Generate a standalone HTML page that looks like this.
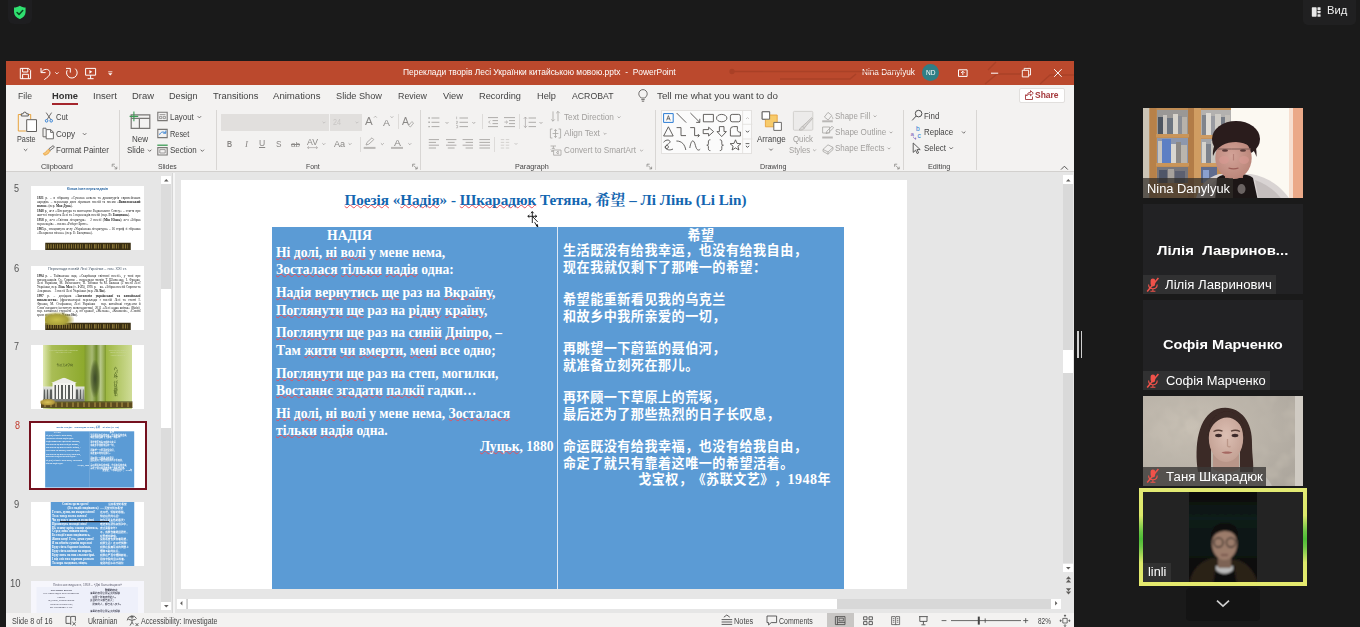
<!DOCTYPE html>
<html lang="uk">
<head>
<meta charset="utf-8">
<title>Zoom Meeting</title>
<style>
*{box-sizing:border-box;margin:0;padding:0}
html,body{width:1360px;height:627px;overflow:hidden;background:#1a1a1a}
body{position:relative;font-family:"Liberation Sans","Noto Sans CJK SC",sans-serif;font-size:9px;color:#444}
.abs{position:absolute}
#ppt{position:absolute;left:6px;top:61px;width:1068px;height:566px;background:#f3f2f1;overflow:hidden}
#titlebar{position:absolute;left:0;top:0;width:1068px;height:24px;background:#bb492d;color:#fff}
#tabs{position:absolute;left:0;top:24px;width:1068px;height:21px;background:#f3f2f1}
#ribbon{position:absolute;left:0;top:45px;width:1068px;height:65px;background:#f3f2f1}
#belowrib{position:absolute;left:0;top:110px;width:1068px;height:6px;background:linear-gradient(#d0cecc 0,#d6d4d2 1.3px,#e6e6e6 1.4px)}
#thumbs{position:absolute;left:0;top:116px;width:154px;height:436px;background:#e6e6e6;overflow:hidden}
#work{position:absolute;left:166px;top:116px;width:890px;height:436px;background:#e6e6e6;overflow:hidden}
.slide{position:absolute;width:726px;height:409px;background:#fff;overflow:hidden}
#slide{left:9px;top:3px}
#status{position:absolute;left:0;top:552px;width:1068px;height:14px;background:#f3f2f1}
.t{position:absolute;white-space:pre;line-height:1;transform-origin:0 50%;display:block}

.slide .ttl{position:absolute;left:1.5px;top:11.3px;width:726px;text-align:center;font:bold 15.1px/18px "Liberation Serif","Noto Serif CJK SC",serif;color:#1366b0;white-space:nowrap}
.tbl{position:absolute;left:91px;top:47px;width:572px;height:362px;background:#5b9bd5}
.tbl .div{position:absolute;left:285px;top:0;width:1px;height:362px;background:#dfe9f5}
.uk{position:absolute;left:4px;width:280px;font:bold 13.6px/17.6px "Liberation Serif",serif;color:#fff;white-space:nowrap}
.zh{position:absolute;left:291px;width:280px;font:bold 13.1px/16.35px "Noto Sans CJK SC","Liberation Sans",sans-serif;color:#fff;white-space:nowrap;letter-spacing:.48px;text-spacing-trim:space-all;margin-top:-.7px}
.sq{text-decoration:underline wavy #e8505a .7px;text-underline-offset:-.7px;text-decoration-skip-ink:none}

.th{position:absolute;left:25px;width:113px;height:64px;background:#fff;overflow:hidden}
.selb{position:absolute;left:22.7px;width:118.4px;height:68.6px;border:2.2px solid #74101e;background:#fff}
.m4{position:absolute;left:0;top:0;width:452px;height:256px;transform:scale(.25);transform-origin:0 0;background:#fff;overflow:hidden}
.m4 .mt{position:absolute;left:0;top:4px;width:452px;text-align:center;font:bold 13px/16px "Liberation Sans",sans-serif;color:#1f5f9f;white-space:nowrap}
.m4 .mb{position:absolute;left:24px;top:40px;width:414px;font:13.2px/15.2px "Liberation Serif",serif;color:#1a1a1a;text-align:justify}
.m4 .mb p{margin:0 0 5.5px 0}
.m4 .orn{position:absolute;left:57px;top:227px;width:342px;height:29px;background:#3a2f12}
.m4 .orn2{position:absolute;left:60px;top:233px;width:336px;height:17px;background:repeating-linear-gradient(90deg,#6b5a28 0 6px,#3a2f12 6px 10px,#8a7638 10px 14px,#3a2f12 14px 18px)}
.m4 .pag{position:absolute;left:56px;top:184px;width:116px;height:52px;background:radial-gradient(ellipse at 40% 60%,#c9c04a 0,#a9a03a 45%,rgba(150,150,60,0) 75%)}
.slide.mini{left:0;top:0;transform:scale(.15565);transform-origin:0 0}
</style>
</head>
<body>
<!-- ZOOM TOP -->
<!--ZOOMTOP-->
<span class="abs" style="left:8.0px;top:0.0px;width:24.0px;height:24.0px;background:#1e1e20;border-radius:0 0 6px 6px;"></span>
<svg class="abs" style="left:13.2px;top:4.6px" width="13.6" height="14.8" viewBox="0 0 16 17"><path d="M8,.6 C10,2 12.400,2.700 14.800,2.800 V8 c0,3.800 -2.800,6.800 -6.800,8.400 C4,14.800 1.200,11.800 1.200,8 V2.800 C3.600,2.700 6,2 8,.6 z" fill="#2fe070"/><path d="M4.800,8.600 l2.300,2.300 l4.300,-4.600" stroke="#0a4d22" stroke-width="1.900" fill="none" stroke-linecap="round" stroke-linejoin="round"/></svg>
<span class="abs" style="left:1303.0px;top:0.0px;width:53.0px;height:25.0px;background:#202021;border-radius:0 0 5px 5px;"></span>
<svg class="abs" style="left:1310.8px;top:6.8px" width="10.4" height="10.3" viewBox="0 0 11 12" fill="#e8e8e8"><rect x=".4" y=".4" width="5.6" height="11" rx=".8"/><rect x="7" y=".4" width="3.6" height="3" rx=".6"/><rect x="7" y="4.4" width="3.6" height="3" rx=".6"/><rect x="7" y="8.4" width="3.6" height="3" rx=".6"/></svg>
<span class="t" style="left:1326.8px;top:5.4px;font-size:11.80px;color:#f0f0f0;transform:scaleX(0.951);">Вид</span>
<span class="abs" style="left:1077.4px;top:331.0px;width:1.2px;height:26.5px;background:#cfcfcf;"></span>
<span class="abs" style="left:1080.6px;top:331.0px;width:1.2px;height:26.5px;background:#cfcfcf;"></span>
<!--/ZOOMTOP-->
<!-- POWERPOINT WINDOW -->
<div id="ppt">
  <div id="titlebar"></div>
  <div id="tabs"></div>
  <div id="ribbon"></div>
  <div id="belowrib"></div>
<!--TITLEBAR-->
<span class="t" style="left:397.0px;top:7.4px;font-size:8.60px;color:#fff;transform:scaleX(0.980);">Переклади творів Лесі Українки китайською мовою.pptx  -  PowerPoint</span>
<span class="t" style="left:856.0px;top:7.4px;font-size:8.60px;color:#fff;transform:scaleX(0.956);">Nina Danylyuk</span>
<span class="abs" style="left:916.0px;top:3.3px;width:17px;height:17px;border-radius:50%;background:#2f7f86"></span>
<span class="t" style="left:920.0px;top:8.6px;font-size:6.60px;color:#fff;transform:scaleX(0.997);">ND</span>
<!--/TITLEBAR-->
<!--TABS-->
<span class="t" style="left:11.5px;top:29.9px;font-size:9.70px;color:#444;transform:scaleX(0.896);">File</span>
<span class="t" style="left:86.5px;top:29.9px;font-size:9.70px;color:#444;transform:scaleX(0.989);">Insert</span>
<span class="t" style="left:125.5px;top:29.9px;font-size:9.70px;color:#444;transform:scaleX(0.972);">Draw</span>
<span class="t" style="left:163.0px;top:29.9px;font-size:9.70px;color:#444;transform:scaleX(0.944);">Design</span>
<span class="t" style="left:206.5px;top:29.9px;font-size:9.70px;color:#444;transform:scaleX(0.966);">Transitions</span>
<span class="t" style="left:267.0px;top:29.9px;font-size:9.70px;color:#444;transform:scaleX(0.990);">Animations</span>
<span class="t" style="left:329.5px;top:29.9px;font-size:9.70px;color:#444;transform:scaleX(0.948);">Slide Show</span>
<span class="t" style="left:391.5px;top:29.9px;font-size:9.70px;color:#444;transform:scaleX(0.912);">Review</span>
<span class="t" style="left:436.5px;top:29.9px;font-size:9.70px;color:#444;transform:scaleX(0.959);">View</span>
<span class="t" style="left:472.5px;top:29.9px;font-size:9.70px;color:#444;transform:scaleX(0.950);">Recording</span>
<span class="t" style="left:530.5px;top:29.9px;font-size:9.70px;color:#444;transform:scaleX(0.952);">Help</span>
<span class="t" style="left:565.5px;top:29.9px;font-size:9.70px;color:#444;transform:scaleX(0.899);">ACROBAT</span>
<span class="t" style="left:650.5px;top:29.9px;font-size:9.70px;color:#444;transform:scaleX(1.011);">Tell me what you want to do</span>
<span class="t" style="left:45.5px;top:29.9px;font-size:9.70px;color:#333;transform:scaleX(0.965);font-weight:bold;">Home</span>
<span class="abs" style="left:45.5px;top:42.0px;width:26.5px;height:2px;background:#a4262c"></span>
<span class="abs" style="left:1012.5px;top:27.0px;width:46.5px;height:15px;background:#fff;border:1px solid #e1dfdd;border-radius:2px"></span>
<span class="t" style="left:1029.4px;top:29.9px;font-size:9.20px;color:#a4373a;transform:scaleX(0.923);font-weight:bold;">Share</span>
<!--/TABS-->
<!--RIBBON-->
<span class="t" style="left:49.8px;top:51.8px;font-size:8.70px;color:#444;transform:scaleX(0.872);">Cut</span>
<span class="t" style="left:50.0px;top:68.8px;font-size:8.70px;color:#444;transform:scaleX(0.935);">Copy</span>
<span class="t" style="left:50.0px;top:85.3px;font-size:8.70px;color:#444;transform:scaleX(0.921);">Format Painter</span>
<span class="t" style="left:10.7px;top:74.1px;font-size:8.70px;color:#444;transform:scaleX(0.836);">Paste</span>
<span class="t" style="left:35.3px;top:101.8px;font-size:8.10px;color:#444;transform:scaleX(0.917);">Clipboard</span>
<span class="t" style="left:125.9px;top:74.1px;font-size:8.70px;color:#444;transform:scaleX(0.925);">New</span>
<span class="t" style="left:120.7px;top:85.3px;font-size:8.70px;color:#444;transform:scaleX(0.920);">Slide</span>
<span class="t" style="left:164.4px;top:51.8px;font-size:8.70px;color:#444;transform:scaleX(0.911);">Layout</span>
<span class="t" style="left:164.4px;top:68.5px;font-size:8.70px;color:#444;transform:scaleX(0.845);">Reset</span>
<span class="t" style="left:164.4px;top:85.3px;font-size:8.70px;color:#444;transform:scaleX(0.917);">Section</span>
<span class="t" style="left:151.8px;top:101.8px;font-size:8.10px;color:#444;transform:scaleX(0.843);">Slides</span>
<span class="abs" style="left:215.0px;top:53.0px;width:108px;height:16.5px;background:#e1dfdd"></span>
<span class="abs" style="left:324.0px;top:53.0px;width:31.5px;height:16.5px;background:#e1dfdd"></span>
<span class="t" style="left:326.5px;top:57.1px;font-size:8.30px;color:#c8c6c4;transform:scaleX(0.867);">24</span>
<span class="t" style="left:299.5px;top:101.8px;font-size:8.10px;color:#444;transform:scaleX(0.845);">Font</span>
<span class="t" style="left:220.7px;top:78.5px;font-size:9.20px;color:#8a8886;transform:scaleX(0.768);font-weight:bold;">B</span>
<span class="t" style="left:238.5px;top:78.5px;font-size:9.20px;color:#8a8886;transform:scaleX(0.978);font-style:italic;font-family:'Liberation Serif',serif;">I</span>
<span class="t" style="left:252.8px;top:78.2px;font-size:9.00px;color:#8a8886;transform:scaleX(0.954);text-decoration:underline;">U</span>
<span class="t" style="left:269.5px;top:78.5px;font-size:9.20px;color:#8a8886;transform:scaleX(0.896);">S</span>
<span class="t" style="left:284.5px;top:79.9px;font-size:7.60px;color:#8a8886;transform:scaleX(1.065);text-decoration:line-through;">ab</span>
<span class="t" style="left:301.0px;top:77.1px;font-size:8.60px;color:#8a8886;transform:scaleX(1.015);">AV</span>
<span class="t" style="left:327.8px;top:78.4px;font-size:9.40px;color:#8a8886;transform:scaleX(0.974);">Aa</span>
<span class="t" style="left:359.3px;top:55.2px;font-size:11.50px;color:#8a8886;transform:scaleX(1.004);">A</span>
<span class="t" style="left:377.0px;top:57.2px;font-size:9.50px;color:#8a8886;transform:scaleX(1.105);">A</span>
<span class="t" style="left:396.0px;top:55.4px;font-size:11.00px;color:#8a8886;transform:scaleX(0.954);">A</span>
<span class="t" style="left:387.5px;top:76.9px;font-size:9.60px;color:#8a8886;transform:scaleX(1.093);">A</span>
<span class="t" style="left:558.0px;top:51.8px;font-size:8.70px;color:#a19f9d;transform:scaleX(0.949);">Text Direction</span>
<span class="t" style="left:558.0px;top:68.3px;font-size:8.70px;color:#a19f9d;transform:scaleX(0.958);">Align Text</span>
<span class="t" style="left:558.0px;top:85.1px;font-size:8.70px;color:#a19f9d;transform:scaleX(0.937);">Convert to SmartArt</span>
<span class="t" style="left:509.0px;top:101.8px;font-size:8.10px;color:#444;transform:scaleX(0.894);">Paragraph</span>
<span class="abs" style="left:655.4px;top:49.0px;width:91px;height:43.5px;background:#fbfbfb;border:1px solid #e3e1df"></span>
<span class="t" style="left:751.0px;top:73.8px;font-size:8.70px;color:#444;transform:scaleX(0.927);">Arrange</span>
<span class="t" style="left:787.0px;top:73.8px;font-size:8.70px;color:#a19f9d;transform:scaleX(0.899);">Quick</span>
<span class="t" style="left:782.8px;top:84.8px;font-size:8.70px;color:#a19f9d;transform:scaleX(0.895);">Styles</span>
<span class="t" style="left:828.7px;top:50.8px;font-size:8.70px;color:#a19f9d;transform:scaleX(0.912);">Shape Fill</span>
<span class="t" style="left:828.7px;top:67.0px;font-size:8.70px;color:#a19f9d;transform:scaleX(0.930);">Shape Outline</span>
<span class="t" style="left:828.7px;top:83.0px;font-size:8.70px;color:#a19f9d;transform:scaleX(0.920);">Shape Effects</span>
<span class="t" style="left:754.0px;top:101.8px;font-size:8.10px;color:#444;transform:scaleX(0.889);">Drawing</span>
<span class="t" style="left:918.4px;top:50.7px;font-size:8.70px;color:#444;transform:scaleX(0.910);">Find</span>
<span class="t" style="left:918.4px;top:66.9px;font-size:8.70px;color:#444;transform:scaleX(0.912);">Replace</span>
<span class="t" style="left:918.4px;top:82.8px;font-size:8.70px;color:#444;transform:scaleX(0.910);">Select</span>
<span class="t" style="left:921.7px;top:101.8px;font-size:8.10px;color:#444;transform:scaleX(0.900);">Editing</span>
<span class="abs" style="left:113.4px;top:48.5px;width:1px;height:60px;background:#d8d6d4"></span>
<span class="abs" style="left:209.6px;top:48.5px;width:1px;height:60px;background:#d8d6d4"></span>
<span class="abs" style="left:414.4px;top:48.5px;width:1px;height:60px;background:#d8d6d4"></span>
<span class="abs" style="left:648.7px;top:48.5px;width:1px;height:60px;background:#d8d6d4"></span>
<span class="abs" style="left:897.0px;top:48.5px;width:1px;height:60px;background:#d8d6d4"></span>
<span class="abs" style="left:969.5px;top:48.5px;width:1px;height:60px;background:#d8d6d4"></span>
<span class="abs" style="left:391.7px;top:52.5px;width:1px;height:15px;background:#dddbd9"></span>
<span class="abs" style="left:353.7px;top:75.5px;width:1px;height:15px;background:#dddbd9"></span>
<span class="abs" style="left:476.0px;top:52.5px;width:1px;height:15px;background:#dddbd9"></span>
<span class="abs" style="left:513.3px;top:52.5px;width:1px;height:15px;background:#dddbd9"></span>
<span class="abs" style="left:488.0px;top:75.5px;width:1px;height:15px;background:#dddbd9"></span>
<!--/RIBBON-->
<!--ICONS-->
<svg class="abs" style="left:0;top:0" width="1068" height="566" viewBox="6 61 1068 566" fill="none" stroke-linecap="butt">
<g stroke="#9c3a22" stroke-width="1.4" opacity=".55" fill="none"><path d="M734,71.5 H905 M780,79 H850 l6,-5 M985,84 l12,-10 H1020 l8,-8 M1040,84 l10,-9 H1074 M996,62 l-8,8"/><circle cx="732" cy="71.5" r="2" fill="#9c3a22"/></g>
<g stroke="#fff" stroke-width="1" fill="none">
<path d="M20.3,68.4 h8.3 l2,2 v8.3 h-10.3 z M22.6,68.4 v3.6 h5.2 v-3.6 M22.6,78.7 v-4.4 h5.8 v4.4"/>
<path d="M41,68 v4.6 h4.6 M41.3,72.4 C43.5,68.2 49.8,68.3 50,73 C50,75.8 47,77.6 44.3,79.6" />
<path d="M55.3,72.3 l1.6,1.6 l1.6,-1.6" stroke-width=".9"/>
<path d="M66,68.4 h4.3 v4.2 M75.2,68.6 A5.3,5.3 0 1 1 67.2,70.2"/>
<path d="M85.6,68.4 h10 v6.8 h-10 z M90.6,75.2 v3.3 M87.6,78.7 h6"/><path d="M89.4,69.9 l2.8,1.9 l-2.8,1.9 z" fill="#fff" stroke="none"/>
<path d="M108.2,71.800 h4.200" stroke-width=".8"/><path d="M108.2,73.300 h4.200 l-2.100,2.200 z" fill="#fff" stroke="none"/>
<path d="M958.5,69.8 h8.6 v6.6 h-8.6 z" /><path d="M962.8,75 v-3.6 M961,73 l1.8,-1.8 l1.8,1.8" stroke-width=".9"/>
<path d="M991,73.2 h7.2"/>
<path d="M1022.3,70.3 h6.3 v6.6 h-6.3 z M1024.2,70.3 v-1.9 h6.3 v6.6 h-1.9" stroke-width=".9"/>
<path d="M1054.2,69.2 l7.4,7.6 M1061.6,69.2 l-7.4,7.6"/>
</g>
<g stroke="#605e5c" stroke-width=".9" fill="none"><path d="M641.2,98 c-1.6,-1.6 -2.4,-2.6 -2.4,-4.2 a4.2,4.2 0 0 1 8.4,0 c0,1.6 -.8,2.6 -2.4,4.2 z M641.3,99.6 h3.4 M641.8,101.2 h2.4"/></g>
<g stroke="#a4373a" stroke-width=".9" fill="none"><path d="M1025.5,94.5 v5 h7 v-3 M1026.5,96 c.5,-2.5 2,-3.6 4,-3.6 v-1.8 l2.8,2.6 l-2.8,2.6 v-1.7 c-1.6,0 -3,.4 -4,1.9 z"/></g>
<g fill="none" stroke-width="1">
<path d="M21.5,114.5 h-3.2 v16.5 h7.5 M27.5,114.5 h3.2 v4.5" stroke="#e8a33d"/><path d="M21.3,116 v-2.2 h1.8 a1.7,1.7 0 0 1 3.4,0 h1.8 v2.2 z" stroke="#605e5c" fill="#f3f2f1"/>
<path d="M26.7,119.7 h9.8 v11.8 h-9.8 z" stroke="#605e5c" fill="#fff"/>
<path d="M23.9,149.0 l1.7,1.7 l1.7,-1.7" stroke="#605e5c" fill="none" stroke-width=".9"/>
<path d="M46.2,112.6 l4.6,7 M51.6,112.6 l-4.6,7" stroke="#605e5c" stroke-width=".9"/><circle cx="46.6" cy="120.8" r="1.3" stroke="#2b7cd3" stroke-width=".9"/><circle cx="51.2" cy="120.8" r="1.3" stroke="#2b7cd3" stroke-width=".9"/>
<path d="M46,129.5 v-1.3 h-3 v8.6 h3" stroke="#605e5c" stroke-width=".9"/><path d="M46.2,129.6 h4.6 l2.6,2.6 v6.6 h-7.2 z M50.6,129.8 v2.6 h2.6" stroke="#605e5c" fill="#fff" stroke-width=".9"/>
<path d="M82.9,133.2 l1.7,1.7 l1.7,-1.7" stroke="#605e5c" fill="none" stroke-width=".9"/>
<path d="M48.6,149 l4.6,-3.4 l1.2,1.6 l-4.6,3.4 z" stroke="#605e5c" stroke-width=".9"/><path d="M48.4,149.2 l1.6,2 c-1,1.8 -2.6,3.4 -5.4,4 c-.6,-.6 -1,-1.2 -1.2,-1.8 c1.6,-.4 3.2,-2.2 5,-4.2 z" stroke="#e8a33d" fill="#f8c77a" stroke-width=".9"/>
<path d="M114.8,164.2 h-2.6 v2.6 M113.4,165.6 l3.2,3.2 M116.8,166.7 v2.2 h-2.2" stroke="#7a7876" fill="none" stroke-width=".7"/>
</g>
<g fill="none">
<path d="M131.2,114.8 h18.6 v13.6 h-18.6 z M131.2,118.4 h18.6 M139.4,118.4 v10" stroke="#797775" stroke-width="1.2"/>
<path d="M129.6,116.4 h8.6 M133.9,111.6 v9.6" stroke="#3c9b54" stroke-width="1.1"/>
<path d="M148.0,149.7 l1.7,1.7 l1.7,-1.7" stroke="#605e5c" fill="none" stroke-width=".9"/>
<path d="M157.8,112.2 h9.4 v8.4 h-9.4 z" stroke="#797775" stroke-width="1.1"/><path d="M159.6,114.6 h5.8 M159.6,116.4 h2.2 v2.2 h-2.2 z M163.2,116.4 h2.2 v2.2 h-2.2 z" stroke="#797775" stroke-width=".7"/>
<path d="M197.7,116.2 l1.7,1.7 l1.7,-1.7" stroke="#605e5c" fill="none" stroke-width=".9"/>
<path d="M157.8,129.4 h9.4 v8.2 h-9.4 z" stroke="#797775" stroke-width="1.1"/><path d="M159.5,134.8 c1,-3 4,-3.6 6,-1.8 M165.8,130.6 v2.6 h-2.6" stroke="#2b7cd3" stroke-width=".9"/>
<path d="M157.8,147.6 h9.4 v7.4 h-9.4 z" stroke="#797775" stroke-width="1.1"/><path d="M157.3,145.2 h10.4" stroke="#3c9b54" stroke-width="1.3"/><path d="M159.8,149.6 h5.4 v3.4 h-5.4 z" stroke="#797775" stroke-width=".7"/>
<path d="M200.6,149.7 l1.7,1.7 l1.7,-1.7" stroke="#605e5c" fill="none" stroke-width=".9"/>
</g>
<g fill="none">
<path d="M322.6,121.8 l1.4,1.4 l1.4,-1.4" stroke="#c2c0be" fill="none" stroke-width=".9"/>
<path d="M355.6,121.8 l1.4,1.4 l1.4,-1.4" stroke="#c2c0be" fill="none" stroke-width=".9"/>
<path d="M374,117.6 l1.4,-1.4 l1.4,1.4" stroke="#a6a4a2" stroke-width=".8"/><path d="M390.6,116.4 l1.3,1.3 l1.3,-1.3" stroke="#a6a4a2" stroke-width=".8"/>
<path d="M408.6,125.6 l3.2,-4 l1.8,1.4 l-3.2,4 z" stroke="#a6a4a2" stroke-width=".8" fill="#f3f2f1"/>
<path d="M307.5,147.6 h10 M309,146.3 l-1.5,1.3 l1.5,1.3 M316,146.3 l1.5,1.3 l-1.5,1.3" stroke="#a6a4a2" stroke-width=".7"/>
<path d="M322.4,143.3 l1.4,1.4 l1.4,-1.4" stroke="#a6a4a2" fill="none" stroke-width=".9"/>
<path d="M348.6,143.3 l1.4,1.4 l1.4,-1.4" stroke="#a6a4a2" fill="none" stroke-width=".9"/>
<path d="M380.9,143.3 l1.4,1.4 l1.4,-1.4" stroke="#a6a4a2" fill="none" stroke-width=".9"/>
<path d="M408.4,143.3 l1.4,1.4 l1.4,-1.4" stroke="#a6a4a2" fill="none" stroke-width=".9"/>
<path d="M366,145 l1,-2.6 l5,-4.6 l1.8,1.8 l-5,4.6 z" stroke="#a6a4a2" stroke-width=".9"/><path d="M363.7,147.9 h11.8" stroke="#b9b7b5" stroke-width="2"/>
<path d="M391,147.9 h12" stroke="#b9b7b5" stroke-width="2"/>
<path d="M415.2,164.2 h-2.6 v2.6 M413.8,165.6 l3.2,3.2 M417.2,166.7 v2.2 h-2.2" stroke="#7a7876" fill="none" stroke-width=".7"/>
</g>
<g fill="none">
<path d="M431.5,118.0 H439.4 M431.5,122.3 H439.4 M431.5,126.6 H439.4 " stroke="#a6a4a2" stroke-width="0.9" fill="none"/>
<path d="M428.4,118 h1.4 M428.4,122.3 h1.4 M428.4,126.6 h1.4" stroke="#a6a4a2" stroke-width="1.4"/>
<path d="M445.6,122.1 l1.4,1.4 l1.4,-1.4" stroke="#a6a4a2" fill="none" stroke-width=".9"/>
<path d="M459.5,118.0 H468.0 M459.5,122.3 H468.0 M459.5,126.6 H468.0 " stroke="#a6a4a2" stroke-width="0.9" fill="none"/>
<path d="M456.6,116.6 v2.6 M456,121.4 h1.6 v1 l-1.6,1 h1.6 M456,125.4 h1.6 v2.4 h-1.6" stroke="#a6a4a2" stroke-width=".6"/>
<path d="M472.4,122.1 l1.4,1.4 l1.4,-1.4" stroke="#a6a4a2" fill="none" stroke-width=".9"/>
<path d="M488.0,117.6 H498.0 M492.5,120.6 H498.0 M492.5,123.6 H498.0 M488.0,126.6 H498.0 " stroke="#a6a4a2" stroke-width="0.9" fill="none"/>
<path d="M490.4,120.6 l-1.8,1.5 l1.8,1.5" stroke="#a6a4a2" stroke-width=".7"/>
<path d="M504.0,117.6 H515.0 M509.0,120.6 H515.0 M509.0,123.6 H515.0 M504.0,126.6 H515.0 " stroke="#a6a4a2" stroke-width="0.9" fill="none"/>
<path d="M504.4,122.1 h3 M506,120.6 l1.6,1.5 l-1.6,1.5" stroke="#a6a4a2" stroke-width=".7"/>
<path d="M528.6,118.0 H536.0 M528.6,122.3 H536.0 M528.6,126.6 H536.0 " stroke="#a6a4a2" stroke-width="0.9" fill="none"/>
<path d="M525.4,117 v10.6 M523.8,118.8 l1.6,-1.8 l1.6,1.8 M523.8,125.8 l1.6,1.8 l1.6,-1.8" stroke="#a6a4a2" stroke-width=".7"/>
<path d="M539.6,122.1 l1.4,1.4 l1.4,-1.4" stroke="#a6a4a2" fill="none" stroke-width=".9"/>
<path d="M428.8,139.6 H439.0 M428.8,142.4 H436.0 M428.8,145.2 H439.0 M428.8,148.0 H436.0 " stroke="#a6a4a2" stroke-width="0.9" fill="none"/>
<path d="M446.0,139.6 H456.4 M447.8,142.4 H454.6 M446.0,145.2 H456.4 M447.8,148.0 H454.6 " stroke="#a6a4a2" stroke-width="0.9" fill="none"/>
<path d="M462.6,139.6 H473.0 M465.6,142.4 H473.0 M462.6,145.2 H473.0 M465.6,148.0 H473.0 " stroke="#a6a4a2" stroke-width="0.9" fill="none"/>
<path d="M479.4,139.6 H490.0 M479.4,142.4 H490.0 M479.4,145.2 H490.0 M479.4,148.0 H490.0 " stroke="#a6a4a2" stroke-width="0.9" fill="none"/>
<path d="M500.8,139.6 H504.2 M500.8,142.4 H504.2 M500.8,145.2 H504.2 M500.8,148.0 H504.2 " stroke="#cfcdcb" stroke-width="0.9" fill="none"/>
<path d="M505.8,139.6 H509.2 M505.8,142.4 H509.2 M505.8,145.2 H509.2 M505.8,148.0 H509.2 " stroke="#cfcdcb" stroke-width="0.9" fill="none"/>
<path d="M514.6,143.1 l1.4,1.4 l1.4,-1.4" stroke="#c2c0be" fill="none" stroke-width=".9"/>
<path d="M553,111.4 v9.8 M551.2,119.4 l1.8,1.8 l1.8,-1.8 M558,121.2 v-9.8 M556.2,113.2 l1.8,-1.8 l1.8,1.8" stroke="#a6a4a2" stroke-width=".8"/>
<path d="M552.4,129 h-2 v9 h2 M558.6,129 h2 v9 h-2 M552.6,133.5 h5.8 M555.5,129.4 v8.4 M554.2,131 l1.3,-1.4 l1.3,1.4 M554.2,136 l1.3,1.4 l1.3,-1.4" stroke="#a6a4a2" stroke-width=".8"/>
<path d="M550.6,146 h5.4 M551.8,148.4 h3 M553.4,146 v2.4 M553.6,150 h7.4 v5.2 h-7.4 z M556.4,152.6 l1.8,-1.6 v3.2 z M550.8,149.4 l2,2 m0,-1.7 v1.7 h-1.7" stroke="#a6a4a2" stroke-width=".8"/>
<path d="M617.6,116.5 l1.4,1.4 l1.4,-1.4" stroke="#a6a4a2" fill="none" stroke-width=".9"/>
<path d="M603.6,133.0 l1.4,1.4 l1.4,-1.4" stroke="#a6a4a2" fill="none" stroke-width=".9"/>
<path d="M640.1,149.8 l1.4,1.4 l1.4,-1.4" stroke="#a6a4a2" fill="none" stroke-width=".9"/>
<path d="M649.6,164.2 h-2.6 v2.6 M648.2,165.6 l3.2,3.2 M651.6,166.7 v2.2 h-2.2" stroke="#7a7876" fill="none" stroke-width=".7"/>
</g>
<g fill="none" stroke="#4a4846" stroke-width=".85">
<path d="M742.6,110.5 v43 M742.6,124.3 h9.8 M742.6,139 h9.8" stroke="#e1dfdd"/>
<path d="M749.0,119.0 l-1.5,-1.5 l-1.5,1.5" stroke="#c8c6c4" fill="none" stroke-width=".9"/>
<path d="M745.9,130.7 l1.6,1.6 l1.6,-1.6" stroke="#444" fill="none" stroke-width=".9"/>
<path d="M745.6,143.6 h3.8" stroke="#444" stroke-width=".8"/>
<path d="M745.9,145.8 l1.6,1.6 l1.6,-1.6" stroke="#444" fill="none" stroke-width=".9"/>
<path d="M663.6,113.6 h9.6 v8.8 h-9.6 z" stroke="#2b7cd3" stroke-width="1"/><path d="M666.6,120.4 l1.8,-4.8 l1.8,4.8 M667.2,118.8 h2.4" stroke="#444" stroke-width=".7"/>
<path d="M676.6,113 l9.6,9.6"/>
<path d="M690.4,113 l9.4,9.4 M699.8,118.8 v3.6 h-3.6"/>
<path d="M703.4,114.4 h10 v7.4 h-10 z"/>
<ellipse cx="721.7" cy="118.1" rx="5.2" ry="3.7"/>
<rect x="730.4" y="114.4" width="10" height="7.4" rx="1.8"/>
<path d="M668.4,126.8 l4.8,9.2 h-9.6 z"/>
<path d="M676.6,127.6 h4.4 v8 h5"/>
<path d="M690.2,127.6 h4.4 v8 h4.6 M697.8,134 l1.6,1.6 l-1.6,1.6"/>
<path d="M703.2,129.6 h5.4 v-2.4 l5,4.4 l-5,4.4 v-2.4 h-5.4 z"/>
<path d="M719.4,126.6 h4.6 v5 h2.4 l-4.7,5 l-4.7,-5 h2.4 z"/>
<path d="M730.4,136 v-6.4 a3,3 0 0 1 3,-3 h4 v3 a2.2,2.2 0 0 0 3,2.4 v4 z"/>
<path d="M663.6,142.4 c1.400,-2.600 5.600,-3.200 6.400,-1 c.8,2.200 -5.600,3.600 -4.800,6.200 c.6,2 3.800,.6 3.200,-1.200 c-.6,-1.800 -3.600,-.8 -2.800,1.400 c.8,2.200 4.600,2.800 7.400,1.200"/>
<path d="M676.4,141 c5.6,0 8.4,3.6 9.4,9"/>
<path d="M689.8,148 c1.4,-9 4,-9 5.6,-2.6 c1.4,5.6 3.4,5.2 4.8,3.8"/>
<path d="M710.4,139.800 c-1.800,0 -2,.8 -2,2.200 v1.800 c0,1 -.4,1.400 -1.600,1.400 c1.200,0 1.600,.4 1.600,1.400 v1.800 c0,1.400 .2,2.200 2,2.200"/>
<path d="M719.800,139.800 c1.800,0 2,.8 2,2.200 v1.800 c0,1 .4,1.400 1.600,1.400 c-1.200,0 -1.600,.4 -1.600,1.400 v1.800 c0,1.400 -.2,2.200 -2,2.200"/>
<path d="M735.5,139.8 l1.5,3.6 l3.9,.3 l-3,2.5 l1,3.8 l-3.4,-2.1 l-3.4,2.1 l1,-3.8 l-3,-2.5 l3.9,-.3 z"/>
</g>
<g stroke-width=".9"><path d="M762.2,111.8 h7.4 v7.4 h-7.4 z" fill="#fff" stroke="#605e5c"/><path d="M765.4,115 h11.8 v11.8 h-11.8 z" fill="#f7cb6b" stroke="#e8a33d"/><path d="M762.2,111.8 h7.4 v7.4 h-7.4 z" fill="#fff" stroke="#605e5c"/><path d="M773.8,122.4 h7.6 v8 h-7.6 z" fill="#fff" stroke="#605e5c"/></g>
<path d="M769.3,148.7 l1.7,1.7 l1.7,-1.7" stroke="#605e5c" fill="none" stroke-width=".9"/>
<g fill="none"><rect x="793.4" y="111.4" width="19.4" height="18.8" rx="1" stroke="#d2d0ce" stroke-width="1" fill="#ecebea"/><path d="M812.6,118.5 c-3,3.4 -6,6.6 -8,9.4 l-2.2,-1.6 c3,-2.6 6,-5.4 9.2,-8.6 z M802.6,126.6 c-1.6,.2 -2.2,1.6 -3.4,3.4 c2.4,.4 4.2,-.2 5.4,-2" stroke="#b3b0ad" stroke-width=".8" fill="#d9d7d5"/></g>
<path d="M813.1,149.5 l1.4,1.4 l1.4,-1.4" stroke="#a6a4a2" fill="none" stroke-width=".9"/>
<g fill="none" stroke="#a6a4a2" stroke-width=".8"><path d="M824.4,117 l3.6,-4.6 l3.8,3 l-3.6,4.6 z M831.8,116.4 c1,1.2 1.4,2 .6,2.8"/><path d="M822.2,121.3 h10.6" stroke="#b9b7b5" stroke-width="2"/>
<path d="M822.6,127 h7 v6 h-7 z M826,133.6 l1,-2.6 l5,-4.8 l1.6,1.6 l-5,4.8 z"/><path d="M822.2,137.5 h10.6" stroke="#b9b7b5" stroke-width="2"/>
<path d="M823,149.4 l5,-4.6 l5,2.6 l-5,4.6 z M823,149.4 v2 l5,2.8 v-2.2 M828,154.2 l5,-4.6 v-2.2"/></g>
<path d="M873.6,115.5 l1.4,1.4 l1.4,-1.4" stroke="#a6a4a2" fill="none" stroke-width=".9"/>
<path d="M889.6,131.7 l1.4,1.4 l1.4,-1.4" stroke="#a6a4a2" fill="none" stroke-width=".9"/>
<path d="M887.6,147.7 l1.4,1.4 l1.4,-1.4" stroke="#a6a4a2" fill="none" stroke-width=".9"/>
<path d="M897.2,164.2 h-2.6 v2.6 M895.8,165.6 l3.2,3.2 M899.2,166.7 v2.2 h-2.2" stroke="#7a7876" fill="none" stroke-width=".7"/>
<g fill="none" stroke="#444" stroke-width=".95"><circle cx="918.6" cy="113.6" r="3.3"/><path d="M916.2,116 l-4,4.4"/>
<path d="M913.2,143 v9.4 l2.4,-2.2 l1.6,3.4 l1.4,-.7 l-1.6,-3.3 h3.2 z" stroke-width=".85"/></g>
<g font-family="Liberation Sans,sans-serif" font-size="6.6" fill="#2b7cd3" stroke="none"><text x="916" y="130.8">b</text><text x="917.6" y="137.6">c</text><text x="910.6" y="136" font-size="6.2" fill="#7a57b8">a</text></g><path d="M913.4,136.6 c0,1.6 1,2.2 2.6,2 M915,137.6 l1.2,1 l-1.2,1" stroke="#7a57b8" stroke-width=".6" fill="none"/>
<path d="M962.0,131.5 l1.7,1.7 l1.7,-1.7" stroke="#605e5c" fill="none" stroke-width=".9"/>
<path d="M949.5,147.3 l1.7,1.7 l1.7,-1.7" stroke="#605e5c" fill="none" stroke-width=".9"/>
<path d="M1061,169.6 l3.4,-3.4 l3.4,3.4" stroke="#444" stroke-width=".9" fill="none"/>
</svg>
<!--/ICONS-->
  <div id="thumbs">
<!--THUMBS-->
<span class="t" style="left:8.4px;top:7.4px;font-size:10.20px;color:#555;transform:scaleX(0.881);">5</span>
<span class="t" style="left:8.4px;top:86.8px;font-size:10.20px;color:#555;transform:scaleX(0.917);">6</span>
<span class="t" style="left:8.4px;top:165.4px;font-size:10.20px;color:#555;transform:scaleX(0.881);">7</span>
<span class="t" style="left:8.6px;top:244.4px;font-size:10.20px;color:#c0392b;transform:scaleX(0.881);">8</span>
<span class="t" style="left:8.2px;top:323.2px;font-size:10.20px;color:#555;transform:scaleX(0.917);">9</span>
<span class="t" style="left:3.7px;top:402.2px;font-size:10.20px;color:#555;transform:scaleX(0.934);">10</span>
<div class="th" style="top:9.4px;"><div class="m4"><div class="mt">Кілька імен перекладачів</div><div class="mb" style="top:40px"><p><b>1921</b> р. – в збірнику «Сучасна новела та драматургія європейських народів» – переклади двох ліричних поезій та поеми «<b>Вавилонський полон</b>» (пер. <b>Мао Дунь</b>).</p><p><b>1948</b> р., ж-л «Література та мистецтво Радянського Союзу» – стаття про життя і творчість Лесі та 5 перекладів поезій (пер. <b>Ге Баоцюань</b>).</p><p><b>1958</b> р., ж-л «Світова література» – 2 поезії (<b>Мін Юань</b>); ж-л «Збірка перекладів» – поема «Роберт Брюс».</p><p><b>1985</b> р., спецвипуск ж-лу «Українська література» – 16 строф зі збірника «На крилах пісень» (пер. Ге Баоцюань).</p></div><div class="orn"></div><div class="orn2"></div></div></div>
<div class="th" style="top:88.8px;"><div class="m4"><div class="mt"><span style="font-weight:normal;color:#456;font-size:15px">Переклади поезій Лесі Українки – поч. ХХІ ст.</span></div><div class="mb" style="top:31px"><p><b>1994</b> р. – Тайванське вид. «Скарбниця світової поезії», у томі про письменників Сх. Європи – переклади творів Т. Шевченка, І. Франка, Лесі Українки, М. Рильського, П. Тичини та М. Бажана (2 поезії Лесі Українки, пер. <b>Лінь Мєн</b> (с. <b>1-25</b>), 1995 р. – кн. «Збірка поезій Європи та Америки» – 3 поезії Лесі Українки (пер. <b>Лі Лін</b>).</p><p><b>1997</b> р. – довідник «<b>Антологія української та китайської письменства</b>» (фрагментарні переклади з поезій Лесі та статті І. Франка, М. Стефаника, Лесі Українки – пер. китайські студенти й Слов’янського інституту мовознавства), 2011 «Лесі наша квітка» (Київ), пер. китайські студенти – д. об’єднано, «Желань», «Конвалія», «Contra spem spero» (пер. <b>Чжан Ібо</b>).</p></div><div class="orn"></div><div class="orn2"></div><div class="pag"></div></div></div>
<div class="th" style="top:167.8px;"><div class="m4" style="background:#fff"><div style="position:absolute;left:48px;top:0;width:356px;height:256px;background:linear-gradient(90deg,#dfe8b0 0,#a9bd55 10%,#8eaa2e 45%,#9cb640 70%,#cfdc97 100%)"></div><div style="position:absolute;left:214px;top:0;width:86px;height:226px;background:linear-gradient(90deg,#7f9a2a,#a8ba74 35%,#6f8a2c 55%,#b8c88a 75%,#7f9a2a)"></div><div style="position:absolute;left:236px;top:60px;width:40px;height:150px;background:radial-gradient(ellipse at center,#3d4a2a 0,rgba(70,85,40,.6) 50%,rgba(90,110,40,0) 75%)"></div><div style="position:absolute;left:48px;top:166px;width:166px;height:60px;background:linear-gradient(180deg,#e4e6e2 0,#c4c7c3 30%,#9a9d99 100%)"></div><div style="position:absolute;left:52px;top:178px;width:158px;height:40px;background:repeating-linear-gradient(90deg,rgba(60,64,62,.75) 0 5px,rgba(255,255,255,0) 5px 13px)"></div><div style="position:absolute;left:86px;top:150px;width:92px;height:76px;background:#f3f3ef"></div><div style="position:absolute;left:80px;top:130px;width:104px;height:22px;background:#ecece8;clip-path:polygon(0 100%,50% 0,100% 100%)"></div><div style="position:absolute;left:94px;top:160px;width:78px;height:60px;background:repeating-linear-gradient(90deg,rgba(50,54,52,.8) 0 6px,rgba(255,255,255,0) 6px 14px)"></div><div style="position:absolute;left:48px;top:216px;width:166px;height:10px;background:#7d807c"></div><div style="position:absolute;left:40px;top:226px;width:366px;height:26px;background:repeating-linear-gradient(90deg,#5d4b1f 0 14px,#8a7434 14px 22px);border-top:3px solid #3f3416;border-bottom:3px solid #3f3416"></div><div style="position:absolute;left:36px;top:216px;width:62px;height:26px;background:radial-gradient(ellipse at center,#d9c45a 0,#b49a3c 55%,rgba(160,140,60,0) 80%)"></div><div style="position:absolute;left:100px;top:72px;width:70px;text-align:center;font:bold 11px/12px 'Noto Serif CJK SC',serif;color:#3d4d1c">鲁迅美术学院</div><div style="position:absolute;left:330px;top:86px;width:18px;font:bold 17px/19px 'Noto Serif CJK SC',serif;color:#4f6320">乌克兰诗选集</div><div style="position:absolute;left:306px;top:18px;width:84px;font:6px/9px 'Liberation Sans',sans-serif;color:#c9d69a;text-align:center">ЛЕСЯ УКРАЇНКА ВИБРАНІ ТВОРИ КИТАЙСЬКОЮ МОВОЮ ПЕРЕКЛАД</div><div style="position:absolute;left:70px;top:18px;width:120px;font:6px/9px 'Liberation Sans',sans-serif;color:#c9d69a;text-align:center">СХІДНОЄВРОПЕЙСЬКИЙ УНІВЕРСИТЕТ ІМЕНІ ЛЕСІ УКРАЇНКИ</div></div></div>
<div class="selb" style="top:244.0px"></div>
<div class="th" style="top:246.6px;"><div class="slide mini">
      <div class="ttl">Поезія «Надія» - Шкарадюк Тетяна, 希望 – Лі Лінь (Li Lin)</div>
      <div class="tbl">
        <div class="div"></div>
        <div class="uk" style="top:0;text-align:center;left:0;width:155px">НАДІЯ</div>
        <div class="uk" style="top:16.6px">Ні долі, ні волі у мене нема,</div>
        <div class="uk" style="top:34.2px">Зосталася тільки надія одна:</div>
        <div class="uk" style="top:57px">Надія вернутись ще раз на Вкраїну,</div>
        <div class="uk" style="top:74.6px">Поглянути ще раз на рідну країну,</div>
        <div class="uk" style="top:97.1px">Поглянути ще раз на синій Дніпро, –</div>
        <div class="uk" style="top:115px">Там жити чи вмерти, мені все одно;</div>
        <div class="uk" style="top:137.5px">Поглянути ще раз на степ, могилки,</div>
        <div class="uk" style="top:154.8px">Востаннє згадати палкії гадки…</div>
        <div class="uk" style="top:177.5px">Ні долі, ні волі у мене нема, Зосталася</div>
        <div class="uk" style="top:194.5px">тільки надія одна.</div>
        <div class="uk" style="top:211px;text-align:right;left:0;width:281.5px">Луцьк, 1880</div>
        <div class="zh" style="top:1px;text-align:center;left:286px;width:286px">希望</div>
        <div class="zh" style="top:16px">生活既没有给我幸运，也没有给我自由，</div>
        <div class="zh" style="top:33px">现在我就仅剩下了那唯一的希望：</div>
        <div class="zh" style="top:65px">希望能重新看见我的乌克兰</div>
        <div class="zh" style="top:82px">和故乡中我所亲爱的一切，</div>
        <div class="zh" style="top:114px">再眺望一下蔚蓝的聂伯河，</div>
        <div class="zh" style="top:131px">就准备立刻死在那儿。</div>
        <div class="zh" style="top:163px">再环顾一下草原上的荒塚，</div>
        <div class="zh" style="top:180px">最后还为了那些热烈的日子长叹息，</div>
        <div class="zh" style="top:212px">命运既没有给我幸福，也没有给我自由，</div>
        <div class="zh" style="top:229px">命定了就只有靠着这唯一的希望活着。</div>
        <div class="zh" style="top:245px;text-align:right;left:286px;width:273px">戈宝权，《苏联文艺》，<span style="font-family:'Liberation Serif',serif;font-size:14px">1948</span>年</div>
      </div></div></div>
<div class="th" style="top:325.4px;"><div class="m4" style="background:#fff"><div style="position:absolute;left:79px;top:0;width:334px;height:256px;background:#5b9bd5"></div><div style="position:absolute;left:84px;top:1px;width:186px;font:bold 12.6px/15.6px 'Liberation Serif',serif;color:#fff;white-space:nowrap"><div style="text-align:center">Contra spem spero!</div><div style="text-align:right">(Без надії сподіваюсь)</div><div>Гетьте, думи, ви хмари осінні!</div><div>То ж тепер весна золота!</div><div>Чи то так у жалю, в голосінні</div><div>Проминуть молодії літа?</div><div>Ні, я хочу крізь сльози сміятись,</div><div>Серед лиха співати пісні,</div><div>Без надії таки сподіватись,</div><div>Жити хочу! Геть, думи сумні!</div><div>Я на вбогім сумнім перелозі</div><div>Буду сіять барвисті квітки,</div><div>Буду сіять квітки на морозі,</div><div>Буду лить на них сльози гіркі.</div><div>І від сліз тих гарячих розтане</div><div>Та кора льодовая, міцна,</div></div><div style="position:absolute;left:276px;top:1px;width:140px;font:bold 10.5px/15.6px 'Noto Sans CJK SC',sans-serif;color:#fff;white-space:nowrap;overflow:hidden"><div style="text-align:center">没有希望的希望</div><div>——无望中犹怀希望</div><div>走开吧，忧郁的思绪，</div><div>你这秋天的乌云！</div><div>如今正是金色的春天！</div><div>难道要在悲伤和哭泣中，</div><div>度过青春年华？</div><div>不，我要含着眼泪微笑，</div><div>在苦难中歌唱，</div><div>没有希望也要怀着希望，</div><div>我要生活！走开吧忧愁！</div><div>我要在贫瘠荒凉的田野上</div><div>播种五彩的花朵，</div><div>我要在严寒中播种鲜花，</div><div>用我辛酸的泪水浇灌。</div><div>滚烫的泪水将会融化</div></div><div style="position:absolute;left:116px;top:76px;width:196px;height:4.500px;background:#15151f"></div></div></div>
<div class="th" style="top:403.8px;height:33px;"><div class="m4" style="background:#f6f6fc"><div class="mt" style="font-weight:normal;color:#667;font-size:13px;top:6px">Пекінське видання, 1958 – «Дві Батьківщини»</div><div style="position:absolute;left:22px;top:24px;width:406px;height:240px;background:#eef0fa"></div><div style="position:absolute;left:36px;top:28px;width:170px;font:10px/14px 'Liberation Serif',serif;color:#223;text-align:center"><b>ДОСВІТНІ ВОГНІ</b><br>Ніч темна людей всіх потомлених скрила<br>Під чорні, широкії крила.<br>Погасли вечірні огні;<br>Усі спочивають у сні.<br><br>Ніч темна людей всіх потомлених скрила</div><div style="position:absolute;left:236px;top:28px;width:150px;font:10px/14px 'Noto Sans CJK SC',sans-serif;color:#223"><b style="margin-left:60px">黎明的灯火</b><br>漆黑的夜用它那宽大的翅膀<br>　遮蔽了所有疲倦的人。<br>黄昏的灯火都已熄灭；<br>　所有的人，都已进入梦乡。<br><br>漆黑的夜用它那宽大的翅膀</div></div></div>
<!--/THUMBS-->
  </div>
  <div id="work">
    <div class="slide" id="slide">
<!--SLIDE-->

      <div class="ttl"><span class="sq">Поезія</span> «<span class="sq">Надія</span>» - <span class="sq">Шкарадюк</span> Тетяна, 希望 – Лі Лінь (Li Lin)</div>
      <div class="tbl">
        <div class="div"></div>
        <div class="uk" style="top:0;text-align:center;left:0;width:155px">НАДІЯ</div>
        <div class="uk" style="top:16.6px"><span class="sq">Ні</span> <span class="sq">долі</span>, <span class="sq">ні</span> <span class="sq">волі</span> у мене нема,</div>
        <div class="uk" style="top:34.2px"><span class="sq">Зосталася</span> <span class="sq">тільки</span> <span class="sq">надія</span> одна:</div>
        <div class="uk" style="top:57px"><span class="sq">Надія</span> <span class="sq">вернутись</span> <span class="sq">ще</span> раз на <span class="sq">Вкраїну</span>,</div>
        <div class="uk" style="top:74.6px"><span class="sq">Поглянути</span> <span class="sq">ще</span> раз на <span class="sq">рідну</span> <span class="sq">країну</span>,</div>
        <div class="uk" style="top:97.1px"><span class="sq">Поглянути</span> <span class="sq">ще</span> раз на <span class="sq">синій</span> <span class="sq">Дніпро</span>, –</div>
        <div class="uk" style="top:115px">Там <span class="sq">жити</span> <span class="sq">чи</span> <span class="sq">вмерти</span>, <span class="sq">мені</span> все одно;</div>
        <div class="uk" style="top:137.5px"><span class="sq">Поглянути</span> <span class="sq">ще</span> раз на степ, могилки,</div>
        <div class="uk" style="top:154.8px"><span class="sq">Востаннє</span> <span class="sq">згадати</span> <span class="sq">палкії</span> гадки…</div>
        <div class="uk" style="top:177.5px"><span class="sq">Ні</span> <span class="sq">долі</span>, <span class="sq">ні</span> <span class="sq">волі</span> у мене нема, <span class="sq">Зосталася</span></div>
        <div class="uk" style="top:194.5px"><span class="sq">тільки</span> <span class="sq">надія</span> одна.</div>
        <div class="uk" style="top:211px;text-align:right;left:0;width:281.5px"><span class="sq">Луцьк</span>, 1880</div>
        <div class="zh" style="top:1px;text-align:center;left:286px;width:286px">希望</div>
        <div class="zh" style="top:16px">生活既没有给我幸运，也没有给我自由，</div>
        <div class="zh" style="top:33px">现在我就仅剩下了那唯一的希望：</div>
        <div class="zh" style="top:65px">希望能重新看见我的乌克兰</div>
        <div class="zh" style="top:82px">和故乡中我所亲爱的一切，</div>
        <div class="zh" style="top:114px">再眺望一下蔚蓝的聂伯河，</div>
        <div class="zh" style="top:131px">就准备立刻死在那儿。</div>
        <div class="zh" style="top:163px">再环顾一下草原上的荒塚，</div>
        <div class="zh" style="top:180px">最后还为了那些热烈的日子长叹息，</div>
        <div class="zh" style="top:212px">命运既没有给我幸福，也没有给我自由，</div>
        <div class="zh" style="top:229px">命定了就只有靠着这唯一的希望活着。</div>
        <div class="zh" style="top:245px;text-align:right;left:286px;width:273px">戈宝权，《苏联文艺》，<span style="font-family:'Liberation Serif',serif;font-size:14px">1948</span>年</div>
      </div>
<!--/SLIDE-->
    </div>
  </div>
<!--SCROLLS-->
<span class="abs" style="left:154.0px;top:111.5px;width:12.0px;height:440.5px;background:#e6e6e6;"></span>
<span class="abs" style="left:155.4px;top:123.0px;width:9.4px;height:421.0px;background:#dcdcdc;"></span>
<span class="abs" style="left:155.4px;top:114.6px;width:9.4px;height:8.4px;background:#fff;"></span>
<svg class="abs" style="left:156.8px;top:115.7px" width="6.6" height="6.6"><polygon points="1.0,4.4 5.6,4.4 3.3,2.1" fill="#605e5c"/></svg>
<span class="abs" style="left:155.4px;top:228.4px;width:9.4px;height:139.0px;background:#fff;"></span>
<span class="abs" style="left:155.4px;top:540.8px;width:9.4px;height:8.4px;background:#fff;"></span>
<svg class="abs" style="left:156.8px;top:541.7px" width="6.6" height="6.6"><polygon points="1.0,2.1 5.6,2.1 3.3,4.4" fill="#605e5c"/></svg>
<span class="abs" style="left:166.2px;top:111.6px;width:1.0px;height:440.4px;background:#d6d6d6;"></span>
<span class="abs" style="left:167.2px;top:111.6px;width:1.5px;height:440.4px;background:#f5f5f5;"></span>
<span class="abs" style="left:1056.0px;top:114.0px;width:12.0px;height:438.0px;background:#e6e6e6;"></span>
<span class="abs" style="left:1057.2px;top:123.0px;width:10.2px;height:379.0px;background:#d9d9d9;"></span>
<span class="abs" style="left:1057.2px;top:114.4px;width:10.2px;height:8.4px;background:#fff;"></span>
<svg class="abs" style="left:1059.0px;top:115.5px" width="6.6" height="6.6"><polygon points="1.0,4.4 5.6,4.4 3.3,2.1" fill="#605e5c"/></svg>
<span class="abs" style="left:1057.2px;top:289.0px;width:10.2px;height:22.8px;background:#fff;"></span>
<span class="abs" style="left:1057.2px;top:502.6px;width:10.2px;height:8.6px;background:#fff;"></span>
<svg class="abs" style="left:1059.0px;top:503.7px" width="6.6" height="6.6"><polygon points="1.0,2.1 5.6,2.1 3.3,4.4" fill="#605e5c"/></svg>
<svg class="abs" style="left:1057.8px;top:514.0px" width="9" height="22" fill="#605e5c" stroke="none"><path d="M4.5,1.2 l2.6,3 h-5.2 z M4.5,4.6 l2.6,3 h-5.2 z"/><path d="M4.5,19.6 l2.6,-3 h-5.2 z M4.5,16.2 l2.6,-3 h-5.2 z"/></svg>
<span class="abs" style="left:170.0px;top:533.5px;width:886.0px;height:18.5px;background:#e6e6e6;"></span>
<span class="abs" style="left:180.0px;top:537.6px;width:865.0px;height:10.2px;background:#d8d8d8;"></span>
<span class="abs" style="left:171.0px;top:537.6px;width:9.0px;height:10.2px;background:#fff;"></span>
<svg class="abs" style="left:172.0px;top:539.4px" width="6.6" height="6.6"><polygon points="4.4,1.0 4.4,5.6 2.1,3.3" fill="#605e5c"/></svg>
<span class="abs" style="left:180.5px;top:537.6px;width:650.5px;height:10.2px;background:#fff;border-left:1px solid #d0d0d0;"></span>
<span class="abs" style="left:1045.0px;top:537.6px;width:9.6px;height:10.2px;background:#fff;"></span>
<svg class="abs" style="left:1046.7px;top:539.4px" width="6.6" height="6.6"><polygon points="2.1,1.0 2.1,5.6 4.4,3.3" fill="#605e5c"/></svg>
<svg class="abs" style="left:520.0px;top:149.0px" width="14" height="18" viewBox="526 210 14 18" fill="none" stroke="#111" stroke-width=".9"><path d="M532.3,211.6 V223 M527.8,216.3 H536.8 M531,213.2 l1.3,-1.6 l1.3,1.600 M529.400,215 l-1.600,1.300 l1.600,1.300 M535.2,215 l1.600,1.300 l-1.600,1.300 M532.5,216.5 l5.200,5.400 M534.600,222.200 l2.800,4.600"/><path d="M536.2,225.200 l1.600,1.800 l-.4,-2.400 z" fill="#111"/></svg>
<!--/SCROLLS-->
  <div id="status">
<!--STATUS-->
<span class="t" style="left:5.5px;top:4.1px;font-size:8.30px;color:#444;transform:scaleX(0.878);">Slide 8 of 16</span>
<span class="t" style="left:82.0px;top:4.1px;font-size:8.30px;color:#444;transform:scaleX(0.841);">Ukrainian</span>
<span class="t" style="left:135.0px;top:4.1px;font-size:8.30px;color:#444;transform:scaleX(0.850);">Accessibility: Investigate</span>
<span class="t" style="left:727.8px;top:4.1px;font-size:8.30px;color:#444;transform:scaleX(0.886);">Notes</span>
<span class="t" style="left:772.9px;top:4.1px;font-size:8.30px;color:#444;transform:scaleX(0.842);">Comments</span>
<span class="t" style="left:1031.8px;top:4.1px;font-size:8.30px;color:#444;transform:scaleX(0.777);">82%</span>
<span class="abs" style="left:820.8px;top:0.0px;width:27.2px;height:14.0px;background:#c8c6c4;"></span>
<svg class="abs" style="left:0;top:0" width="1068" height="14" viewBox="6 613 1068 14" fill="none" stroke="#444" stroke-width=".85">
<path d="M66,616.4 h3.6 c.8,0 1.1,.4 1.1,1 v7 c0,-.6 -.4,-1 -1.1,-1 h-3.6 z M75.4,616.4 h-3.6 c-.8,0 -1.1,.4 -1.1,1 M75.4,616.4 v4.4 M72.4,622 l3.4,3.4 M75.8,622 l-3.4,3.4"/>
<circle cx="132" cy="617.2" r="1" /><path d="M128.4,619.4 l3.6,.8 l3.6,-.8 M132,620.2 v2 l-2,3.4 M132,622.2 l1.4,2.2" /><path d="M135.6,623.2 l2.8,2.8 M138.4,623.2 l-2.8,2.8 M136.6,618.6 a5,5 0 0 0 -9.4,1.8"/>
<path d="M723.8,617.2 l3,-2.2 l3,2.2 M721.6,619.6 h10.6 M721.6,622 h10.6 M721.6,624.4 h10.6"/>
<path d="M767,616 h9.6 v6.6 h-5.4 l-2.6,2.4 v-2.4 h-1.6 z"/>
<path d="M835.4,616.6 h9.6 v8 h-9.6 z M837.4,616.6 v8 M837.4,622.4 h7.6" stroke-width=".8"/><path d="M839,618.2 h4.4 v2.6 h-4.4 z" stroke-width=".7"/>
<path d="M863.6,616.8 h3.4 v3 h-3.4 z M869,616.8 h3.4 v3 h-3.4 z M863.6,621.6 h3.4 v3 h-3.4 z M869,621.6 h3.4 v3 h-3.4 z"/>
<path d="M891.6,616.6 h3.6 l.4,.5 l.4,-.5 h3.6 v8 h-3.6 l-.4,.5 l-.4,-.5 h-3.6 z M895.6,617 v8 M892.8,618.6 h1.6 M892.8,620.4 h1.6 M892.8,622.2 h1.6 M896.8,618.6 h1.6 M896.8,620.4 h1.6 M896.8,622.2 h1.6" stroke-width=".7"/>
<path d="M919,616.6 h8.8 M919.8,616.8 v4.6 h7.2 v-4.6 M923.4,621.4 v3 M921.4,624.8 h4"/>
<path d="M941.6,620.6 h4.8 M951,620.6 h70 M985.2,618.4 v4.4 M1023.2,620.6 h5 M1025.7,618.1 v5" stroke-width=".8"/><path d="M977.8,616.6 h2 v8 h-2 z" fill="#444" stroke="none"/>
<path d="M1062.8,618.4 h4.4 v4.6 h-4.4 z M1065,615 v2.2 M1064,616 l1,-1.2 l1,1.2 M1065,626.4 v-2.2 M1064,625.4 l1,1.2 l1,-1.2 M1060,620.7 h1.8 M1061,619.7 l-1.2,1 l1.2,1 M1070,620.7 h-1.8 M1069,619.7 l1.2,1 l-1.2,1" stroke-width=".75"/>
</svg>
<!--/STATUS-->
  </div>
</div>
<!-- PARTICIPANTS -->
<!--PEOPLE-->
<svg class="abs" style="left:1143px;top:108px" width="160" height="90" viewBox="0 0 160 90"><defs><filter id="b1" x="-5%" y="-5%" width="110%" height="110%"><feGaussianBlur stdDeviation=".75"/></filter><clipPath id="c1"><rect width="160" height="90"/></clipPath><radialGradient id="f1" cx=".45" cy=".45" r=".6"><stop offset="0" stop-color="#d3a398"/><stop offset="1" stop-color="#b98478"/></radialGradient></defs><g clip-path="url(#c1)"><g filter="url(#b1)"><rect x="-3" y="-3" width="166" height="96" fill="#c08d55"/><rect x="-3" y="-3" width="9.5" height="96" fill="#cbc4b6"/><rect x="6.5" y="-3" width="7" height="96" fill="#b7814a"/><rect x="45" y="-3" width="6" height="96" fill="#b27c46"/><rect x="51" y="-3" width="7" height="96" fill="#d09d62"/><rect x="14.0" y="2.0" width="31.0" height="24.0" fill="#9a9896"/><rect x="15.0" y="9.0" width="5.0" height="17.0" fill="#4e5560"/><rect x="20.0" y="7.0" width="4.0" height="19.0" fill="#c9c5bf"/><rect x="24.0" y="10.0" width="6.0" height="16.0" fill="#6d7480"/><rect x="30.0" y="6.0" width="5.0" height="20.0" fill="#d8d4cc"/><rect x="35.0" y="8.0" width="4.0" height="18.0" fill="#8a8d94"/><rect x="39.0" y="9.0" width="5.0" height="17.0" fill="#b7b2ab"/><rect x="14.0" y="30.0" width="31.0" height="25.0" fill="#8d97ad"/><rect x="15.0" y="33.0" width="4.0" height="22.0" fill="#c8c4be"/><rect x="19.0" y="31.0" width="9.0" height="24.0" fill="#5d7fc4"/><rect x="28.0" y="36.0" width="5.0" height="19.0" fill="#d9d6d0"/><rect x="33.0" y="34.0" width="5.0" height="21.0" fill="#8c8884"/><rect x="38.0" y="37.0" width="6.0" height="18.0" fill="#bab5ae"/><rect x="14.0" y="59.0" width="31.0" height="16.0" fill="#77767c"/><rect x="16.0" y="62.0" width="8.0" height="13.0" fill="#4f5668"/><rect x="25.0" y="61.0" width="6.0" height="14.0" fill="#a7a29c"/><rect x="32.0" y="63.0" width="10.0" height="12.0" fill="#5b6070"/><rect x="58.0" y="2.0" width="30.0" height="25.0" fill="#b3b1af"/><rect x="59.0" y="7.0" width="4.0" height="20.0" fill="#7f848c"/><rect x="63.0" y="5.0" width="5.0" height="22.0" fill="#dedbd5"/><rect x="68.0" y="8.0" width="4.0" height="19.0" fill="#9a9ca2"/><rect x="72.0" y="6.0" width="6.0" height="21.0" fill="#cfccc6"/><rect x="78.0" y="9.0" width="4.0" height="18.0" fill="#767b86"/><rect x="82.0" y="7.0" width="5.0" height="20.0" fill="#c2beb8"/><rect x="58.0" y="31.0" width="18.0" height="24.0" fill="#a3a5aa"/><rect x="59.0" y="34.0" width="4.0" height="21.0" fill="#d6d3cd"/><rect x="63.0" y="36.0" width="5.0" height="19.0" fill="#7d828c"/><rect x="68.0" y="33.0" width="5.0" height="22.0" fill="#c9c6c0"/><rect x="58.0" y="59.0" width="16.0" height="16.0" fill="#5f6c8e"/><rect x="60.0" y="62.0" width="6.0" height="13.0" fill="#8aa0cf"/><rect x="13" y="26" width="33" height="3.4" fill="#c9955a"/><rect x="13" y="55" width="33" height="3.4" fill="#c9955a"/><rect x="57" y="27" width="32" height="3.4" fill="#cf9c62"/><rect x="57" y="55" width="20" height="3.4" fill="#cf9c62"/><rect x="88" y="-3" width="63" height="96" fill="#fcf9f2"/><rect x="149.5" y="-3" width="14" height="96" fill="#eba988"/><rect x="146" y="-3" width="4" height="96" fill="#f7dfd0"/><path d="M52,93 C56,78 64,69 76,66 L108,66 C126,69 140,80 148,93 z" fill="#d9d4d3"/><path d="M60,93 C63,82 68,74 76,70 L72,93 z M112,72 C124,76 134,84 140,93 L116,93 z" fill="#c5bfbe"/><path d="M72,93 L74,70 C80,64 104,64 110,70 L115,93 z" fill="#1c1517"/><rect x="82" y="58" width="18" height="12" fill="#b07a6e"/><ellipse cx="93" cy="31" rx="24" ry="18" fill="#2a1b1d"/><ellipse cx="90.5" cy="50" rx="18.2" ry="21" fill="url(#f1)"/><path d="M70,48 C69,34 78,26 92,26 C106,26 115,34 113.5,49 C111,39.500 104,34.500 93,34 C83,34 74,38 70,48 z" fill="#2a1b1d"/><path d="M74.500,41 h14 M94,41 h14 M88.500,41 h5.500" stroke="#7d5a55" stroke-width="1"/><ellipse cx="82" cy="42.500" rx="3" ry="1.300" fill="#5a3a38"/><ellipse cx="100" cy="42.500" rx="3" ry="1.300" fill="#5a3a38"/><ellipse cx="81" cy="52" rx="5" ry="4" fill="#d89a92" opacity=".6"/><ellipse cx="101" cy="52" rx="5" ry="4" fill="#d89a92" opacity=".6"/><path d="M90.500,46 v6.500" stroke="#b58077" stroke-width="1.200" fill="none"/><path d="M85.500,60 c3,1 7,1 10,0" stroke="#9a5c56" stroke-width="1.300" fill="none"/><ellipse cx="98.5" cy="81" rx="4" ry="5" fill="#6a6462"/></g></g></svg>
<span class="abs" style="left:1143.0px;top:178.4px;width:90.0px;height:19.6px;background:rgba(48,44,40,.72);"></span>
<span class="t" style="left:1147.0px;top:182.7px;font-size:12.00px;color:#fff;transform:scaleX(1.073);">Nina Danylyuk</span>
<span class="abs" style="left:1143.0px;top:204.0px;width:160.0px;height:90.0px;background:#222224;"></span>
<span class="t" style="left:1156.7px;top:244.8px;font-size:12.60px;color:#fff;transform:scaleX(1.182);font-weight:bold;">Лілія  Лавринов...</span>
<span class="abs" style="left:1143.0px;top:274.8px;width:132.6px;height:19.2px;background:rgba(52,52,54,.82);"></span>
<svg class="abs" style="left:1145.8px;top:276.6px" width="14" height="16" viewBox="0 0 14 16" fill="none"><rect x="4.6" y="1.4" width="4.6" height="8" rx="2.3" fill="#f0524a"/><path d="M2.6,7.6 c0,2.6 1.8,4.2 4.3,4.2 s4.3,-1.6 4.3,-4.2 M6.9,11.8 v2 M4.4,14.2 h5" stroke="#f0524a" stroke-width="1.1"/><path d="M1.2,14.6 L12.4,1" stroke="#f0524a" stroke-width="1.5"/></svg>
<span class="t" style="left:1165.0px;top:278.9px;font-size:12.00px;color:#fff;transform:scaleX(1.101);">Лілія Лавринович</span>
<span class="abs" style="left:1143.0px;top:300.0px;width:160.0px;height:90.0px;background:#222224;"></span>
<span class="t" style="left:1162.5px;top:338.8px;font-size:12.60px;color:#fff;transform:scaleX(1.163);font-weight:bold;">Софія Марченко</span>
<span class="abs" style="left:1143.0px;top:371.3px;width:127.4px;height:18.7px;background:rgba(52,52,54,.82);"></span>
<svg class="abs" style="left:1145.8px;top:372.8px" width="14" height="16" viewBox="0 0 14 16" fill="none"><rect x="4.6" y="1.4" width="4.6" height="8" rx="2.3" fill="#f0524a"/><path d="M2.6,7.6 c0,2.6 1.8,4.2 4.3,4.2 s4.3,-1.6 4.3,-4.2 M6.9,11.8 v2 M4.4,14.2 h5" stroke="#f0524a" stroke-width="1.1"/><path d="M1.2,14.6 L12.4,1" stroke="#f0524a" stroke-width="1.5"/></svg>
<span class="t" style="left:1165.6px;top:375.1px;font-size:12.00px;color:#fff;transform:scaleX(1.078);">Софія Марченко</span>
<svg class="abs" style="left:1143px;top:396px" width="160" height="90" viewBox="0 0 160 90"><defs><filter id="b4" x="-5%" y="-5%" width="110%" height="110%"><feGaussianBlur stdDeviation=".75"/></filter><clipPath id="c4"><rect width="160" height="90"/></clipPath><filter id="n4" x="0" y="0" width="100%" height="100%"><feTurbulence type="fractalNoise" baseFrequency=".07" numOctaves="2" seed="7"/><feColorMatrix values="0 0 0 0 .5  0 0 0 0 .46  0 0 0 0 .4  2.200 0 0 0 -.9"/></filter><radialGradient id="g4" cx=".3" cy=".35" r=".9"><stop offset="0" stop-color="#c9c1b5"/><stop offset="1" stop-color="#aaa49b"/></radialGradient><radialGradient id="f4" cx=".5" cy=".45" r=".6"><stop offset="0" stop-color="#dcbfb3"/><stop offset="1" stop-color="#c29f92"/></radialGradient></defs><g clip-path="url(#c4)"><rect width="160" height="90" fill="url(#g4)"/><rect width="152" height="90" filter="url(#n4)"/><g filter="url(#b4)"><rect x="152" y="-3" width="11" height="96" fill="#d0cbc3"/><path d="M38,93 C44,78 58,71 72,70 L96,70 C112,71 126,79 130,93 z" fill="#bfbab4"/><path d="M55,76 C51,50 55,20 74,13 C93,7 110,22 109,48 C109,60 111,68 110,76 L97,76 L97,50 L68,50 L68,76 z" fill="#3a2925"/><path d="M70,58 h26 v15 c-8,5 -18,5 -26,0 z" fill="#b99689"/><ellipse cx="83" cy="42" rx="17.2" ry="24" fill="url(#f4)"/><path d="M65,40 C65,24 74,15 84,15.5 C95,16 102,25 101.5,40 C99,28 92,21.5 84,21.5 C76,21.5 68,28 65,40 z" fill="#3a2925"/><path d="M70.5,35.5 c3,-1.6 6,-1.6 9,-.4 M88,35.100 c3,-1.2 6,-1.200 9,.4" stroke="#5a4038" stroke-width="1.3" fill="none"/><ellipse cx="75.5" cy="39.5" rx="3.4" ry="1.7" fill="#3d2c2a"/><ellipse cx="92" cy="39.5" rx="3.4" ry="1.7" fill="#3d2c2a"/><path d="M84.500,43 v7 c1,1 2,1 3,.4" stroke="#bb9789" stroke-width="1.300" fill="none"/><path d="M78.5,56.500 c3,-1.2 8,-1.200 11,0 c-3,1.800 -8,1.800 -11,0 z" fill="#a56862"/></g></g></svg>
<span class="abs" style="left:1143.0px;top:466.7px;width:123.0px;height:19.3px;background:rgba(60,58,56,.8);"></span>
<svg class="abs" style="left:1145.8px;top:468.4px" width="14" height="16" viewBox="0 0 14 16" fill="none"><rect x="4.6" y="1.4" width="4.6" height="8" rx="2.3" fill="#f0524a"/><path d="M2.6,7.6 c0,2.6 1.8,4.2 4.3,4.2 s4.3,-1.6 4.3,-4.2 M6.9,11.8 v2 M4.4,14.2 h5" stroke="#f0524a" stroke-width="1.1"/><path d="M1.2,14.6 L12.4,1" stroke="#f0524a" stroke-width="1.5"/></svg>
<span class="t" style="left:1165.6px;top:470.9px;font-size:12.00px;color:#fff;transform:scaleX(1.105);">Таня Шкарадюк</span>
<span class="abs" style="left:1139.0px;top:488.2px;width:168.0px;height:97.8px;background:linear-gradient(180deg,#e3ea74 0,#dce86a 28%,#6cc544 44%,#4dbd36 52%,#6cc544 60%,#dce86a 76%,#e6ea6e 100%);"></span>
<span class="abs" style="left:1143.0px;top:492.0px;width:160.0px;height:90.0px;background:#232323;"></span>
<svg class="abs" style="left:1188.6px;top:492px" width="68.4" height="90" viewBox="0 0 68.4 90"><defs><filter id="b5" x="-5%" y="-5%" width="110%" height="110%"><feGaussianBlur stdDeviation=".8"/></filter><clipPath id="c5"><rect width="68.4" height="90"/></clipPath><linearGradient id="g5" x1="0" y1="0" x2="0" y2="1"><stop offset="0" stop-color="#070908"/><stop offset=".3" stop-color="#0c1c1a"/><stop offset=".6" stop-color="#0e1514"/><stop offset="1" stop-color="#0a0a0a"/></linearGradient></defs><g clip-path="url(#c5)"><g filter="url(#b5)"><rect x="-3" y="-3" width="75" height="96" fill="url(#g5)"/><path d="M0,93 C2,76 14,68 24,66 L48,68 C58,70 66,80 70,93 z" fill="#2a2118"/><path d="M24,93 L27,74 L45,74 L48,93 z" fill="#0f0f10"/><path d="M27,78 c5,5 12,5 17,0 l0,-4 l-17,0 z" fill="#b9b9b9"/><rect x="29" y="62" width="13" height="14" fill="#7d6354"/><ellipse cx="35.5" cy="52" rx="12.5" ry="16" fill="#9b7c6a"/><path d="M22,50 C20,36 28,30 37,31 C46,31 51,38 49,50 C47,42 42,39 36,39 C29,39 24,43 22,50 z" fill="#0c0b0b"/><circle cx="29.5" cy="50.5" r="4.6" fill="none" stroke="#2a2220" stroke-width="1.2"/><circle cx="42" cy="50.5" r="4.6" fill="none" stroke="#2a2220" stroke-width="1.2"/><path d="M32,63 h7" stroke="#6a4540" stroke-width="1.4"/></g></g></svg>
<span class="abs" style="left:1143.0px;top:562.5px;width:28.0px;height:19.5px;background:rgba(52,52,52,.85);"></span>
<span class="t" style="left:1147.6px;top:566.1px;font-size:12.00px;color:#fff;transform:scaleX(1.055);">linli</span>
<span class="abs" style="left:1186.0px;top:588.4px;width:73.5px;height:33.0px;background:#141414;border-radius:4px;"></span>
<svg class="abs" style="left:1215px;top:598px" width="16" height="12" fill="none"><path d="M2,2.6 l6,5.6 l6,-5.6" stroke="#cfcfcf" stroke-width="1.7"/></svg>
<!--/PEOPLE-->
</body>
</html>
